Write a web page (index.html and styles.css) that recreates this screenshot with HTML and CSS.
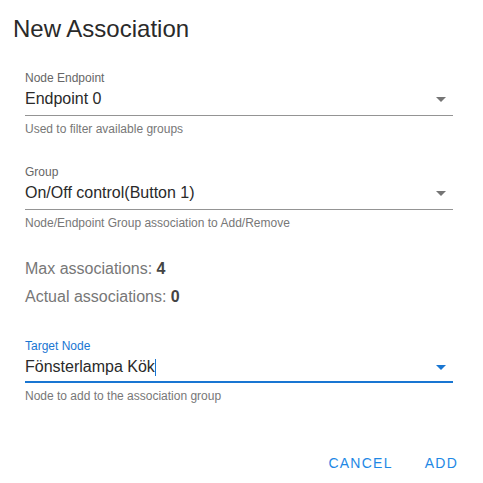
FILE: index.html
```html
<!DOCTYPE html>
<html lang="en">
<head>
    <meta charset="UTF-8">
    <meta name="viewport" content="width=device-width, initial-scale=1.0">
    <title>New Association</title>
    <link rel="stylesheet" href="styles.css">
</head>
<body>
    <div class="dialog">
        <h2 class="dialog-title">New Association</h2>
        <div class="dialog-body">
            <div class="field">
                <label class="field-label">Node Endpoint</label>
                <div class="field-input">
                    <span class="field-value">Endpoint 0</span>
                    <svg class="arrow" viewBox="0 0 24 24" width="24" height="24"><path d="M7 10l5 5 5-5z"/></svg>
                </div>
                <div class="field-hint">Used to filter available groups</div>
            </div>
            <div class="field">
                <label class="field-label">Group</label>
                <div class="field-input">
                    <span class="field-value">On/Off control(Button 1)</span>
                    <svg class="arrow" viewBox="0 0 24 24" width="24" height="24"><path d="M7 10l5 5 5-5z"/></svg>
                </div>
                <div class="field-hint">Node/Endpoint Group association to Add/Remove</div>
            </div>
            <div class="stats">
                <p>Max associations: <b>4</b></p>
                <p>Actual associations: <b>0</b></p>
            </div>
            <div class="field focused">
                <label class="field-label">Target Node</label>
                <div class="field-input">
                    <span class="field-value">Fönsterlampa Kök<span class="caret"></span></span>
                    <svg class="arrow" viewBox="0 0 24 24" width="24" height="24"><path d="M7 10l5 5 5-5z"/></svg>
                </div>
                <div class="field-hint">Node to add to the association group</div>
            </div>
        </div>
        <div class="dialog-actions">
            <button type="button">Cancel</button>
            <button type="button">Add</button>
        </div>
    </div>
</body>
</html>
```

FILE: styles.css
```css
body {
    margin: 0;
    padding: 0;
    background-color: #fff;
    font-family: "Liberation Sans", Arial, sans-serif;
    color: #2a2a2a;
}
.dialog {
    width: 483px;
    height: 483px;
    box-sizing: border-box;
}
.dialog-title {
    margin: 0;
    padding: 15px 13px 0;
    font-size: 24px;
    line-height: 28px;
    font-weight: 400;
    color: #2a2a2a;
}
.dialog-body {
    padding: 27px 30px 0 25px;
}
.field {
    margin-bottom: 27px;
}
.field-label {
    display: block;
    font-size: 12px;
    line-height: 16px;
    color: #666;
}
.field-input {
    display: flex;
    align-items: flex-start;
    justify-content: space-between;
    height: 28px;
    margin-top: 1px;
    border-bottom: 1px solid #949494;
}
.field-value {
    display: flex;
    align-items: center;
    margin-top: 2px;
    font-size: 16px;
    line-height: 20px;
    color: #2a2a2a;
}
.arrow {
    fill: #757575;
}
.field-hint {
    margin-top: 5px;
    font-size: 12px;
    line-height: 16px;
    color: #777;
}
.focused .field-label {
    color: #1976d2;
}
.focused .field-input {
    height: 26px;
    border-bottom: 2px solid #1976d2;
}
.focused .arrow {
    fill: #1976d2;
}
.caret {
    display: inline-block;
    width: 1px;
    height: 17px;
    background-color: #1976d2;
}
.stats {
    margin-top: -3px;
    margin-bottom: 27px;
}
.stats p {
    margin: 0;
    font-size: 16px;
    line-height: 28px;
    color: #777;
}
.stats b {
    color: #444;
    font-weight: 700;
}
.dialog-actions {
    display: flex;
    justify-content: flex-end;
    padding: 0 9px 0 0;
    margin-top: 41px;
}
.dialog-actions button {
    height: 36px;
    padding: 0 16px;
    background: none;
    border: none;
    font-family: "Liberation Sans", Arial, sans-serif;
    font-size: 14px;
    font-weight: 400;
    letter-spacing: 1.25px;
    text-transform: uppercase;
    color: #1e88e5;
    cursor: pointer;
}
```
